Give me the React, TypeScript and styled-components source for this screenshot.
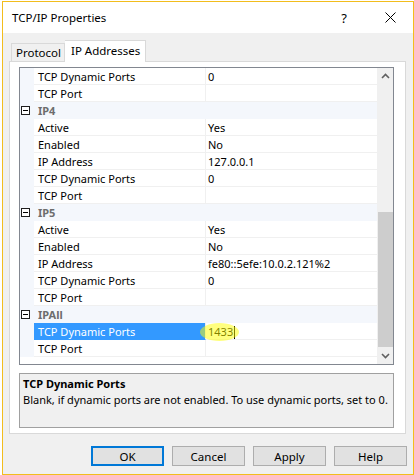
import React from "react";
import styled, { createGlobalStyle, css } from "styled-components";

const Global = createGlobalStyle`
  html, body { margin: 0; padding: 0; background: #ffffff; }
  body { font-family: "Segoe UI", "Noto Sans", "DejaVu Sans", sans-serif; font-size: 11px; color: #000; }
  * { box-sizing: border-box; }
`;

const Window = styled.div`
  margin: 1px 0 0 2px;
  width: 412px;
  height: 474px;
  border: 1px solid #f2bd1d;
  background: #f0f0f0;
  display: flex;
  flex-direction: column;
`;

const TitleBar = styled.div`
  height: 31px;
  background: #ffffff;
  display: flex;
  align-items: center;
  padding-left: 9px;
`;

const TitleText = styled.div`
  flex: 1;
  font-size: 11.5px;
  margin-top: -1px;
`;

const TitleButton = styled.div<{ $w: number }>`
  width: ${(p) => p.$w}px;
  height: 31px;
  display: flex;
  align-items: center;
  justify-content: center;
  font-size: 13px;
`;

const Body = styled.div`
  flex: 1;
  display: flex;
  flex-direction: column;
  padding: 7px 6px 0 6px;
`;

const TabRow = styled.div`
  display: flex;
  align-items: flex-end;
  padding-left: 2px;
  height: 21px;
  position: relative;
  z-index: 1;
`;

const Tab = styled.div<{ $active?: boolean }>`
  height: 18px;
  padding: 0 3px 0 4px;
  border: 1px solid #d9d9d9;
  border-bottom: none;
  background: #f0f0f0;
  display: flex;
  align-items: center;
  font-size: 11.5px;
  ${(p) =>
    p.$active &&
    css`
      height: 22px;
      margin-bottom: -1px;
      background: #ffffff;
      padding: 0 5px 2px 6px;
      border-left: none;
    `}
`;

const Panel = styled.div`
  width: 397px;
  height: 373px;
  border: 1px solid #d9d9d9;
  background: #ffffff;
  padding: 5px 0 0 9px;
  display: flex;
  flex-direction: column;
  gap: 8px;
`;

const Grid = styled.div`
  width: 375px;
  height: 298px;
  border: 1px solid #828790;
  display: flex;
  background: #ffffff;
`;

const RowsArea = styled.div`
  flex: 1;
  display: flex;
  flex-direction: column;
  position: relative;
  overflow: hidden;
`;

const Row = styled.div<{ $category?: boolean }>`
  height: 17px;
  display: flex;
  flex-shrink: 0;
  background: ${(p) => (p.$category ? "#f4f7fc" : "#ffffff")};
`;

const Margin = styled.div`
  width: 14px;
  background: #f4f7fc;
  display: flex;
  align-items: center;
  justify-content: flex-end;
  padding-right: 4px;
`;

const MinusBox = styled.div`
  width: 9px;
  height: 9px;
  border: 1px solid #1e1e1e;
  background: #ffffff;
  display: flex;
  align-items: center;
  justify-content: center;
  &::after {
    content: "";
    width: 5px;
    height: 1px;
    background: #000;
  }
`;

const CategoryLabel = styled.div`
  flex: 1;
  padding-left: 4px;
  font-weight: bold;
  color: #6d6d6d;
  line-height: 17px;
  border-bottom: 1px solid #f4f7fc;
`;

const NameCell = styled.div<{ $selected?: boolean }>`
  width: 172px;
  padding-left: 4px;
  line-height: 17px;
  white-space: nowrap;
  border-bottom: 1px solid #f0f0f0;
  border-right: 1px solid #f0f0f0;
  ${(p) =>
    p.$selected &&
    css`
      background: #3399ff;
      color: #ffffff;
      border-bottom-color: #3399ff;
    `}
`;

const ValueCell = styled.div`
  flex: 1;
  padding-left: 2px;
  line-height: 17px;
  white-space: nowrap;
  border-bottom: 1px solid #f0f0f0;
  position: relative;
`;

const Caret = styled.span`
  display: inline-block;
  width: 1px;
  height: 13px;
  background: #000;
  vertical-align: -3px;
  margin-left: 1px;
`;

const Highlight = styled.div`
  position: absolute;
  left: -6px;
  top: 0px;
  width: 39px;
  height: 18px;
  border-radius: 50%;
  background: rgba(255, 255, 0, 0.5);
  pointer-events: none;
`;

const ScrollBar = styled.div`
  width: 16px;
  background: #f0f0f0;
  display: flex;
  flex-direction: column;
  align-items: center;
`;

const ScrollArrow = styled.div`
  height: 17px;
  width: 16px;
  display: flex;
  align-items: center;
  justify-content: center;
`;

const ScrollTrack = styled.div<{ $h: number }>`
  height: ${(p) => p.$h}px;
  width: 16px;
`;

const Thumb = styled.div`
  width: 15px;
  height: 137px;
  background: #cdcdcd;
`;

const Description = styled.div`
  width: 375px;
  height: 55px;
  border: 1px solid #a0a0a0;
  background: #f0f0f0;
  padding: 2px 3px;
`;

const DescTitle = styled.div`
  font-weight: bold;
  line-height: 16px;
`;

const DescText = styled.div`
  line-height: 16px;
  white-space: nowrap;
`;

const ButtonRow = styled.div`
  display: flex;
  justify-content: flex-end;
  gap: 8px;
  padding: 12px 0 0 0;
`;

const Button = styled.div<{ $default?: boolean }>`
  width: 73px;
  height: 20px;
  background: #e1e1e1;
  border: 1px solid #adadad;
  display: flex;
  align-items: center;
  justify-content: center;
  font-size: 11.5px;
  ${(p) =>
    p.$default &&
    css`
      border: 2px solid #0078d7;
    `}
`;

type Item =
  | { kind: "cat"; label: string }
  | { kind: "prop"; name: string; value: string; selected?: boolean };

const items: Item[] = [
  { kind: "prop", name: "TCP Dynamic Ports", value: "0" },
  { kind: "prop", name: "TCP Port", value: "" },
  { kind: "cat", label: "IP4" },
  { kind: "prop", name: "Active", value: "Yes" },
  { kind: "prop", name: "Enabled", value: "No" },
  { kind: "prop", name: "IP Address", value: "127.0.0.1" },
  { kind: "prop", name: "TCP Dynamic Ports", value: "0" },
  { kind: "prop", name: "TCP Port", value: "" },
  { kind: "cat", label: "IP5" },
  { kind: "prop", name: "Active", value: "Yes" },
  { kind: "prop", name: "Enabled", value: "No" },
  { kind: "prop", name: "IP Address", value: "fe80::5efe:10.0.2.121%2" },
  { kind: "prop", name: "TCP Dynamic Ports", value: "0" },
  { kind: "prop", name: "TCP Port", value: "" },
  { kind: "cat", label: "IPAll" },
  { kind: "prop", name: "TCP Dynamic Ports", value: "1433", selected: true },
  { kind: "prop", name: "TCP Port", value: "" },
];

const Chevron = ({ up }: { up?: boolean }) => (
  <svg width="9" height="6" viewBox="0 0 9 6">
    <path
      d={up ? "M1 5 L4.5 1.5 L8 5" : "M1 1 L4.5 4.5 L8 1"}
      fill="none"
      stroke="#606060"
      strokeWidth="1.6"
    />
  </svg>
);

export default function App() {
  return (
    <>
      <Global />
      <Window>
        <TitleBar>
          <TitleText>TCP/IP Properties</TitleText>
          <TitleButton $w={46}>?</TitleButton>
          <TitleButton $w={46}>
            <svg width="11" height="11" viewBox="0 0 11 11">
              <path d="M0.5 0.5 L10.5 10.5 M10.5 0.5 L0.5 10.5" stroke="#000" strokeWidth="1" />
            </svg>
          </TitleButton>
        </TitleBar>
        <Body>
          <TabRow>
            <Tab>Protocol</Tab>
            <Tab $active>IP Addresses</Tab>
          </TabRow>
          <Panel>
            <Grid>
              <RowsArea>
                {items.map((it, i) =>
                  it.kind === "cat" ? (
                    <Row key={i} $category>
                      <Margin>
                        <MinusBox />
                      </Margin>
                      <CategoryLabel>{it.label}</CategoryLabel>
                    </Row>
                  ) : (
                    <Row key={i}>
                      <Margin />
                      <NameCell $selected={it.selected}>{it.name}</NameCell>
                      <ValueCell>
                        {it.value}
                        {it.selected && (
                          <>
                            <Caret />
                            <Highlight />
                          </>
                        )}
                      </ValueCell>
                    </Row>
                  )
                )}
              </RowsArea>
              <ScrollBar>
                <ScrollArrow>
                  <Chevron up />
                </ScrollArrow>
                <ScrollTrack $h={128} />
                <Thumb />
                <ScrollArrow>
                  <Chevron />
                </ScrollArrow>
              </ScrollBar>
            </Grid>
            <Description>
              <DescTitle>TCP Dynamic Ports</DescTitle>
              <DescText>Blank, if dynamic ports are not enabled. To use dynamic ports, set to 0.</DescText>
            </Description>
          </Panel>
          <ButtonRow>
            <Button $default>OK</Button>
            <Button>Cancel</Button>
            <Button>Apply</Button>
            <Button>Help</Button>
          </ButtonRow>
        </Body>
      </Window>
    </>
  );
}
